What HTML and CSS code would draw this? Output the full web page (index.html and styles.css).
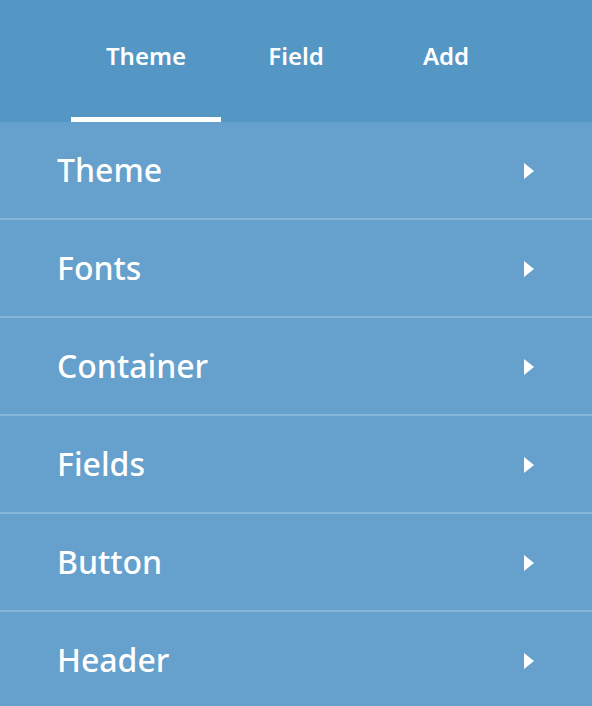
FILE: index.html
```html
<!DOCTYPE html>
<html lang="en">
<head>
  <meta charset="UTF-8">
  <title>Style editor</title>
  <link rel="stylesheet" href="styles.css">
</head>
<body>

  <header class="tabs-bar">
    <nav class="tabs">
      <a class="tab active" href="#">Theme</a>
      <a class="tab" href="#">Field</a>
      <a class="tab" href="#">Add</a>
    </nav>
  </header>

  <ul class="menu">
    <li class="menu-item"><span>Theme</span><i class="arrow"></i></li>
    <li class="menu-item"><span>Fonts</span><i class="arrow"></i></li>
    <li class="menu-item"><span>Container</span><i class="arrow"></i></li>
    <li class="menu-item"><span>Fields</span><i class="arrow"></i></li>
    <li class="menu-item"><span>Button</span><i class="arrow"></i></li>
    <li class="menu-item"><span>Header</span><i class="arrow"></i></li>
  </ul>

</body>
</html>
```

FILE: styles.css
```css
body {
  margin: 0;
  font-family: 'Noto Sans', 'Open Sans', sans-serif;
  background: #66a0cc;
  color: #fff;
}

.tabs-bar {
  background: #5496c4;
  height: 122px;
}

.tabs {
  display: flex;
  justify-content: center;
  height: 100%;
}

.tab {
  width: 150px;
  box-sizing: border-box;
  padding-top: 39px;
  text-align: center;
  color: #fff;
  text-decoration: none;
  font-weight: 600;
  font-size: 24px;
  border-bottom: 5px solid transparent;
}

.tab.active {
  border-bottom-color: #fff;
}

.menu {
  list-style: none;
  margin: 0;
  padding: 0;
}

.menu-item {
  display: flex;
  align-items: center;
  justify-content: space-between;
  height: 96px;
  padding: 0 58px 0 57px;
  border-bottom: 2px solid #86b6da;
  font-size: 32px;
  font-weight: 500;
}

.menu-item span {
  margin-top: -1px;
}

.arrow {
  width: 0;
  height: 0;
  margin-top: 2px;
  border-top: 8px solid transparent;
  border-bottom: 8px solid transparent;
  border-left: 10px solid #fff;
}
```
